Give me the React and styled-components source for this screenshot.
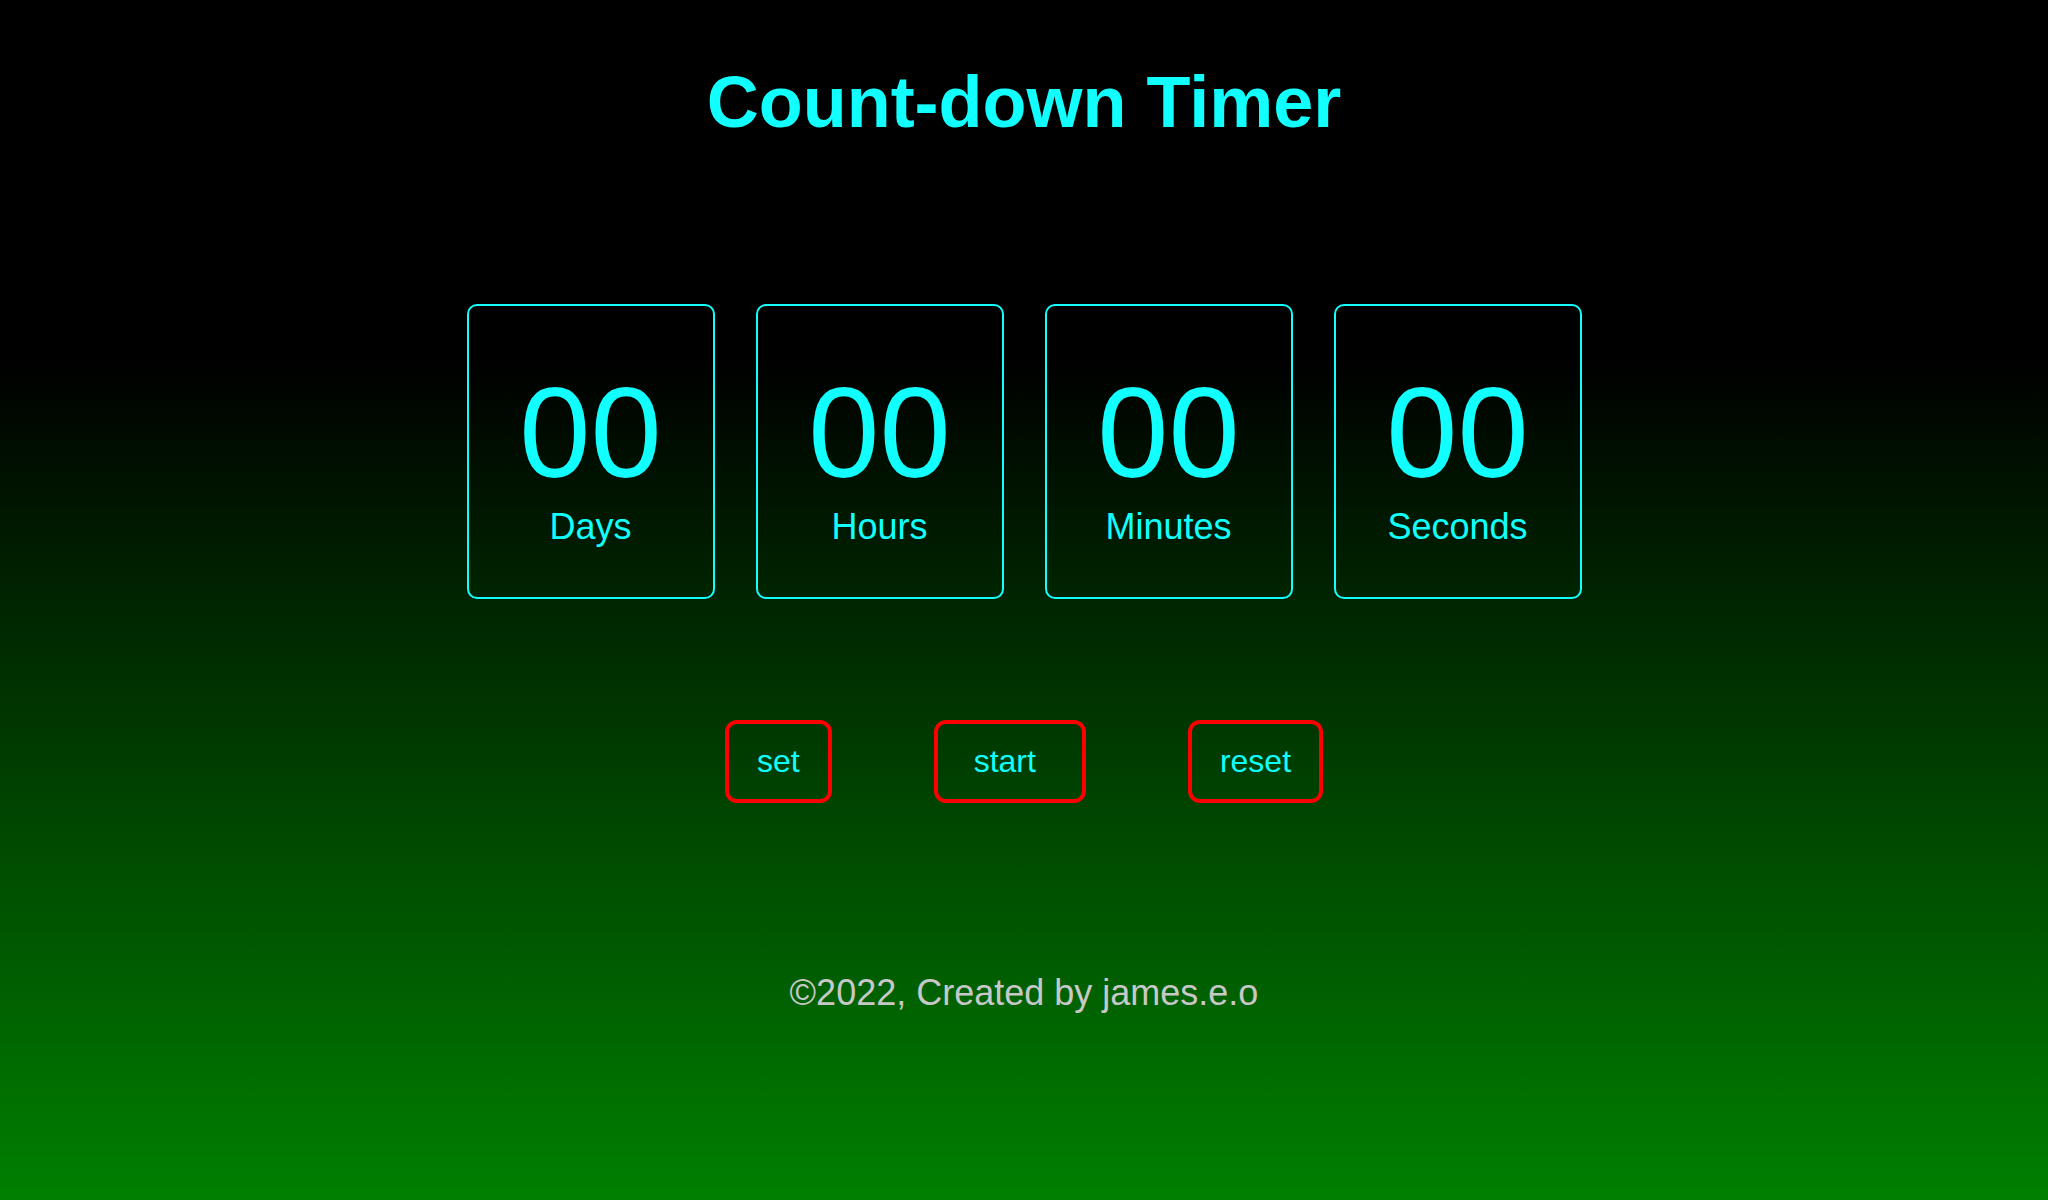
import React, { useState } from "react";
import styled, { createGlobalStyle } from "styled-components";

const cyan = "#11ffff";

const GlobalStyle = createGlobalStyle`
  html, body {
    margin: 0;
    padding: 0;
  }
  body {
    font-family: "Liberation Sans", Arial, sans-serif;
    background: #000;
  }
`;

const units = ["Days", "Hours", "Minutes", "Seconds"];

const pad = (n) => String(n).padStart(2, "0");

const App = () => {
  const [time] = useState({ Days: 0, Hours: 0, Minutes: 0, Seconds: 0 });

  return (
    <Page>
      <GlobalStyle />
      <Title>Count-down Timer</Title>

      <TimerRow>
        {units.map((unit) => (
          <TimeBox key={unit}>
            <Number>{pad(time[unit])}</Number>
            <Label>{unit}</Label>
          </TimeBox>
        ))}
      </TimerRow>

      <ButtonRow>
        <Button>set</Button>
        <Button $left={36} $right={46}>
          start
        </Button>
        <Button>reset</Button>
      </ButtonRow>

      <Footer>©2022, Created by james.e.o</Footer>
    </Page>
  );
};

const Page = styled.div`
  min-height: 100vh;
  box-sizing: border-box;
  padding-top: 61px;
  display: flex;
  flex-direction: column;
  align-items: center;
  background: linear-gradient(to bottom, #000 30%, #008000 100%);
  font-family: "Liberation Sans", Arial, sans-serif;
`;

const Title = styled.h1`
  margin: 0;
  font-size: 72px;
  font-weight: bold;
  line-height: normal;
  color: ${cyan};
  text-align: center;
`;

const TimerRow = styled.div`
  display: flex;
  gap: 41px;
  margin-top: 161px;
`;

const TimeBox = styled.div`
  width: 248px;
  height: 295px;
  box-sizing: border-box;
  padding-top: 3px;
  border: 2px solid ${cyan};
  border-radius: 10px;
  display: flex;
  flex-direction: column;
  align-items: center;
  justify-content: center;
  color: ${cyan};
`;

const Number = styled.span`
  font-size: 128px;
  line-height: normal;
`;

const Label = styled.span`
  font-size: 36px;
  line-height: normal;
`;

const ButtonRow = styled.div`
  display: flex;
  gap: 102px;
  margin-top: 121px;
`;

const Button = styled.button`
  font-family: "Liberation Sans", Arial, sans-serif;
  font-size: 32px;
  line-height: normal;
  color: ${cyan};
  background: transparent;
  border: 4px solid #ff0000;
  border-radius: 12px;
  padding: 19px ${(p) => p.$right || 28}px 19px ${(p) => p.$left || 28}px;
  cursor: pointer;
`;

const Footer = styled.p`
  margin: 169px 0 0;
  font-size: 36px;
  line-height: normal;
  color: #c8c8c8;
  text-align: center;
`;

export default App;
